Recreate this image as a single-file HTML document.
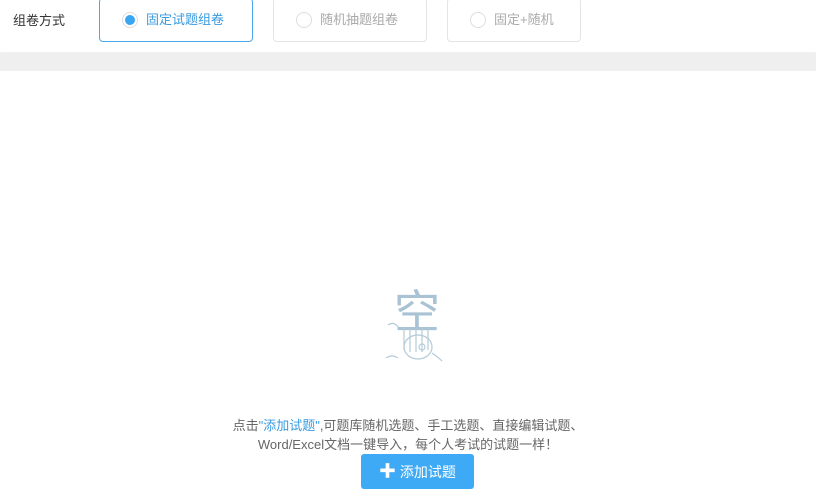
<!DOCTYPE html>
<html><head><meta charset="utf-8"><style>
body{margin:0;width:816px;height:503px;overflow:hidden;background:#fff;font-family:"Liberation Sans","Noto Sans CJK SC",sans-serif;position:relative}
.top{position:absolute;left:0;top:0;width:816px;height:52px;background:#fff;box-shadow:0 2px 4px rgba(0,0,0,.08)}
.band{position:absolute;left:0;top:53px;width:816px;height:18px;background:#efefef}
.lbl{position:absolute;left:13px;top:10px;font-size:13px;color:#333}
.opt{position:absolute;top:-2px;height:44px;border:1px solid #e4e4e4;border-radius:4px;box-sizing:border-box;font-size:13px;color:#aaa;line-height:42px}
.opt .r{position:absolute;left:22px;top:13px;width:16px;height:16px;border:1px solid #ddd;border-radius:50%;box-sizing:border-box}
.opt span{position:absolute;left:46px;top:0}
.on{border-color:#4aa8e8;color:#3a9be0}
.on .r:after{content:"";position:absolute;left:2px;top:2px;width:10px;height:10px;border-radius:50%;background:#3aa6f2}
.t{position:absolute;left:0;width:816px;text-align:center;font-size:13px;color:#666}
.btn{position:absolute;left:361px;top:454px;width:113px;height:35px;background:#3eaaf5;border-radius:3px;color:#fff;font-size:14px;line-height:35px;text-align:center}
</style></head><body>
<div class="top">
<div class="lbl">组卷方式</div>
<div class="opt on" style="left:99px;width:154px"><div class="r"></div><span>固定试题组卷</span></div>
<div class="opt" style="left:273px;width:154px"><div class="r"></div><span>随机抽题组卷</span></div>
<div class="opt" style="left:447px;width:134px"><div class="r"></div><span>固定+随机</span></div>
</div>
<div class="band"></div>
<svg style="position:absolute;left:380px;top:283px" width="70" height="85" viewBox="0 0 70 85">
<text x="14" y="45" font-size="46" fill="#a9c2d4" font-family="Noto Sans CJK SC">空</text>
<g stroke="#b5cad8" fill="none" stroke-width="1.2">
<path d="M24 45v22M30 45v24M36 45v24M42 45v24M48 45v22"/>
<ellipse cx="38" cy="64" rx="14" ry="12"/>
<path d="M8 42q6-4 10 2M6 75q6-4 12 0M52 70q6 4 10 8"/>
<circle cx="42" cy="64" r="3"/>
</g></svg>
<div class="t" style="top:415px">点击<span style="color:#3a9be0">"添加试题"</span>,可题库随机选题、手工选题、直接编辑试题、</div>
<div class="t" style="top:434px">Word/Excel文档一键导入，每个人考试的试题一样！</div>
<div class="btn"><b style="font-size:17px">✚</b> 添加试题</div>
</body></html>
